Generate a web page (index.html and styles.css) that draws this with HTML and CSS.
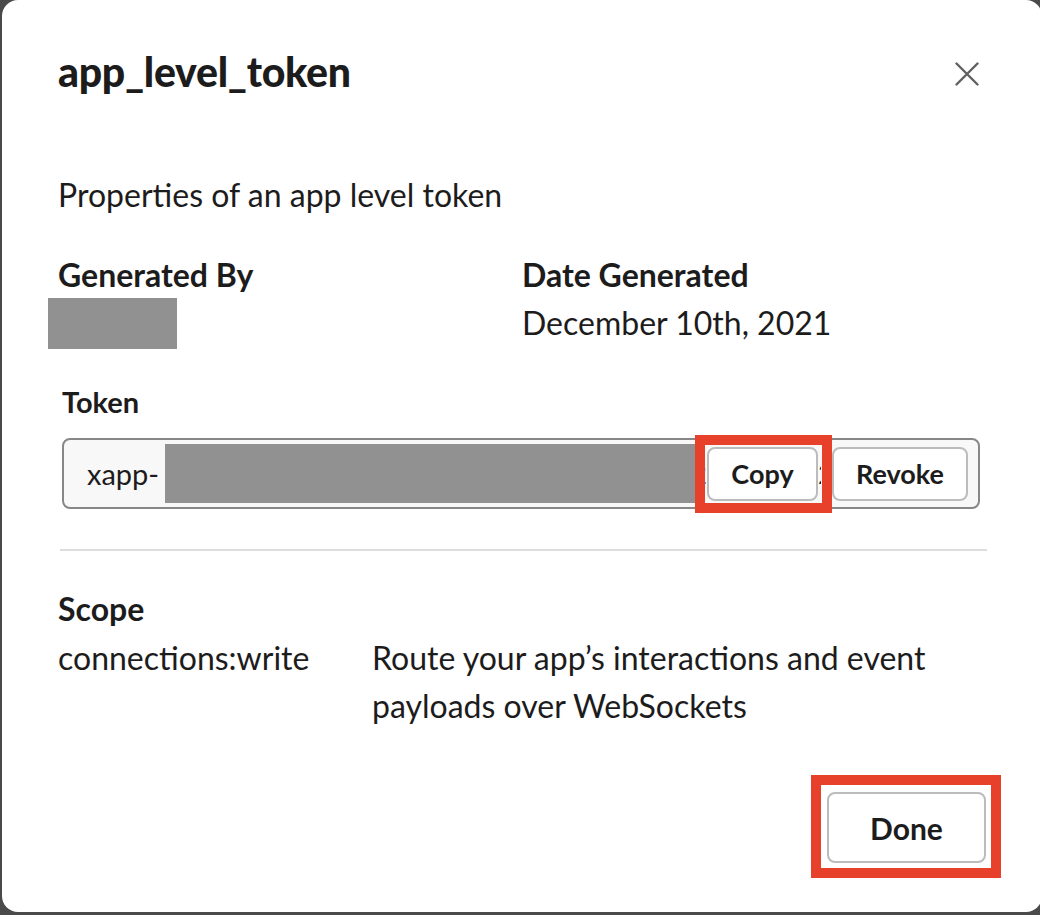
FILE: index.html
```html
<!DOCTYPE html>
<html>
<head>
    <title>app_level_token</title>
    <link rel="stylesheet" href="styles.css">
</head>
<body>
    <div class="modal">
        <div class="modal-header">
            <h1 class="modal-title">app_level_token</h1>
            <button class="close-btn" aria-label="Close">
                <svg width="24" height="24" viewBox="0 0 24 24">
                    <path d="M1.5 1.5 L22.5 22.5 M22.5 1.5 L1.5 22.5" stroke="#616061" stroke-width="2.4" stroke-linecap="round" fill="none"/>
                </svg>
            </button>
        </div>

        <p class="intro">Properties of an app level token</p>

        <div class="meta">
            <div class="meta-col">
                <div class="label">Generated By</div>
                <div class="redacted redacted-user"></div>
            </div>
            <div class="meta-col">
                <div class="label">Date Generated</div>
                <div class="value">December 10th, 2021</div>
            </div>
        </div>

        <div class="token-section">
            <div class="token-label">Token</div>
            <div class="token-field">
                <span class="token-prefix">xapp-</span>
                <div class="redacted redacted-token"></div>
                <div class="highlight highlight-copy">
                    <span class="token-tail tail-left">2</span>
                    <button class="btn btn-copy">Copy</button>
                    <span class="token-tail tail-right">2</span>
                </div>
                <button class="btn btn-revoke">Revoke</button>
            </div>
        </div>

        <hr class="divider">

        <div class="scope">
            <div class="label">Scope</div>
            <div class="scope-row">
                <div class="scope-name">connections:write</div>
                <div class="scope-desc">Route your app’s interactions and event payloads over WebSockets</div>
            </div>
        </div>

        <div class="modal-footer">
            <div class="highlight highlight-done">
                <button class="btn btn-done">Done</button>
            </div>
        </div>
    </div>
</body>
</html>
```

FILE: styles.css
```css
body {
    margin: 0;
    background-color: #4a4a4a;
    font-family: Lato, "Open Sans", sans-serif;
    color: #1d1c1d;
    overflow: hidden;
}
.modal {
    box-sizing: border-box;
    width: 1040px;
    height: 912px;
    margin-left: 2px;
    background-color: #ffffff;
    border-radius: 16px;
    padding: 0 55px 0 56px;
    display: flex;
    flex-direction: column;
}
.modal-header {
    display: flex;
    align-items: center;
    justify-content: space-between;
    height: 142px;
}
.modal-title {
    margin: 0;
    font-size: 41px;
    font-weight: 900;
    letter-spacing: -0.3px;
}
.close-btn {
    background: none;
    border: none;
    padding: 0;
    margin: 6px 8px 0 0;
    width: 24px;
    height: 24px;
    cursor: pointer;
}
.close-btn svg {
    display: block;
}
.intro {
    margin: 31px 0 0 0;
    font-size: 32px;
    line-height: 44px;
}
.meta {
    display: flex;
    margin-top: 36px;
}
.meta-col {
    width: 464px;
}
.label {
    font-size: 32px;
    font-weight: 700;
    line-height: 44px;
}
.value {
    font-size: 32px;
    line-height: 44px;
    margin-top: 4px;
}
.redacted {
    background-color: #919191;
}
.redacted-user {
    width: 129px;
    height: 51px;
    margin-left: -10px;
    margin-top: 1px;
}
.token-section {
    margin-top: 35px;
    padding-left: 4px;
}
.token-label {
    font-size: 29px;
    font-weight: 700;
    line-height: 36px;
}
.token-field {
    box-sizing: border-box;
    margin-top: 18px;
    width: 918px;
    height: 71px;
    border: 2px solid #878787;
    border-radius: 8px;
    background-color: #f8f8f8;
    display: flex;
    align-items: center;
    padding: 0 10px 0 23px;
    font-size: 29px;
}
.token-prefix {
    width: 78px;
    flex-shrink: 0;
}
.redacted-token {
    flex: 1;
    height: 59px;
}
.highlight {
    border: 10px solid #e8412b;
    display: flex;
    align-items: center;
}
.highlight-copy {
    box-sizing: border-box;
    width: 137px;
    height: 78px;
    flex-shrink: 0;
    background-color: #f8f8f8;
}
.token-tail {
    display: block;
    overflow: hidden;
    font-size: 27px;
    line-height: 30px;
}
.tail-left {
    width: 2px;
    direction: rtl;
}
.tail-right {
    width: 3px;
}
.btn {
    box-sizing: border-box;
    background-color: #ffffff;
    border: 2px solid #bcbcbc;
    border-radius: 8px;
    font-family: Lato, "Open Sans", sans-serif;
    font-weight: 700;
    color: #1d1c1d;
    padding: 0;
    cursor: pointer;
}
.btn-copy {
    width: 111px;
    height: 54px;
    font-size: 27px;
}
.btn-revoke {
    width: 136px;
    height: 54px;
    font-size: 27px;
    flex-shrink: 0;
}
.divider {
    border: none;
    border-top: 2px solid #dddddd;
    margin: 40px 0 0 2px;
    width: 927px;
}
.scope {
    margin-top: 36px;
}
.scope-row {
    display: flex;
    margin-top: 3px;
    font-size: 32px;
    line-height: 48px;
}
.scope-name {
    width: 314px;
    flex-shrink: 0;
}
.scope-desc {
    width: 600px;
}
.modal-footer {
    display: flex;
    justify-content: flex-end;
    margin-top: 45px;
    margin-right: -14px;
}
.highlight-done {
    padding: 7px 5px 5px 6px;
}
.btn-done {
    width: 159px;
    height: 71px;
    font-size: 30px;
}
```
